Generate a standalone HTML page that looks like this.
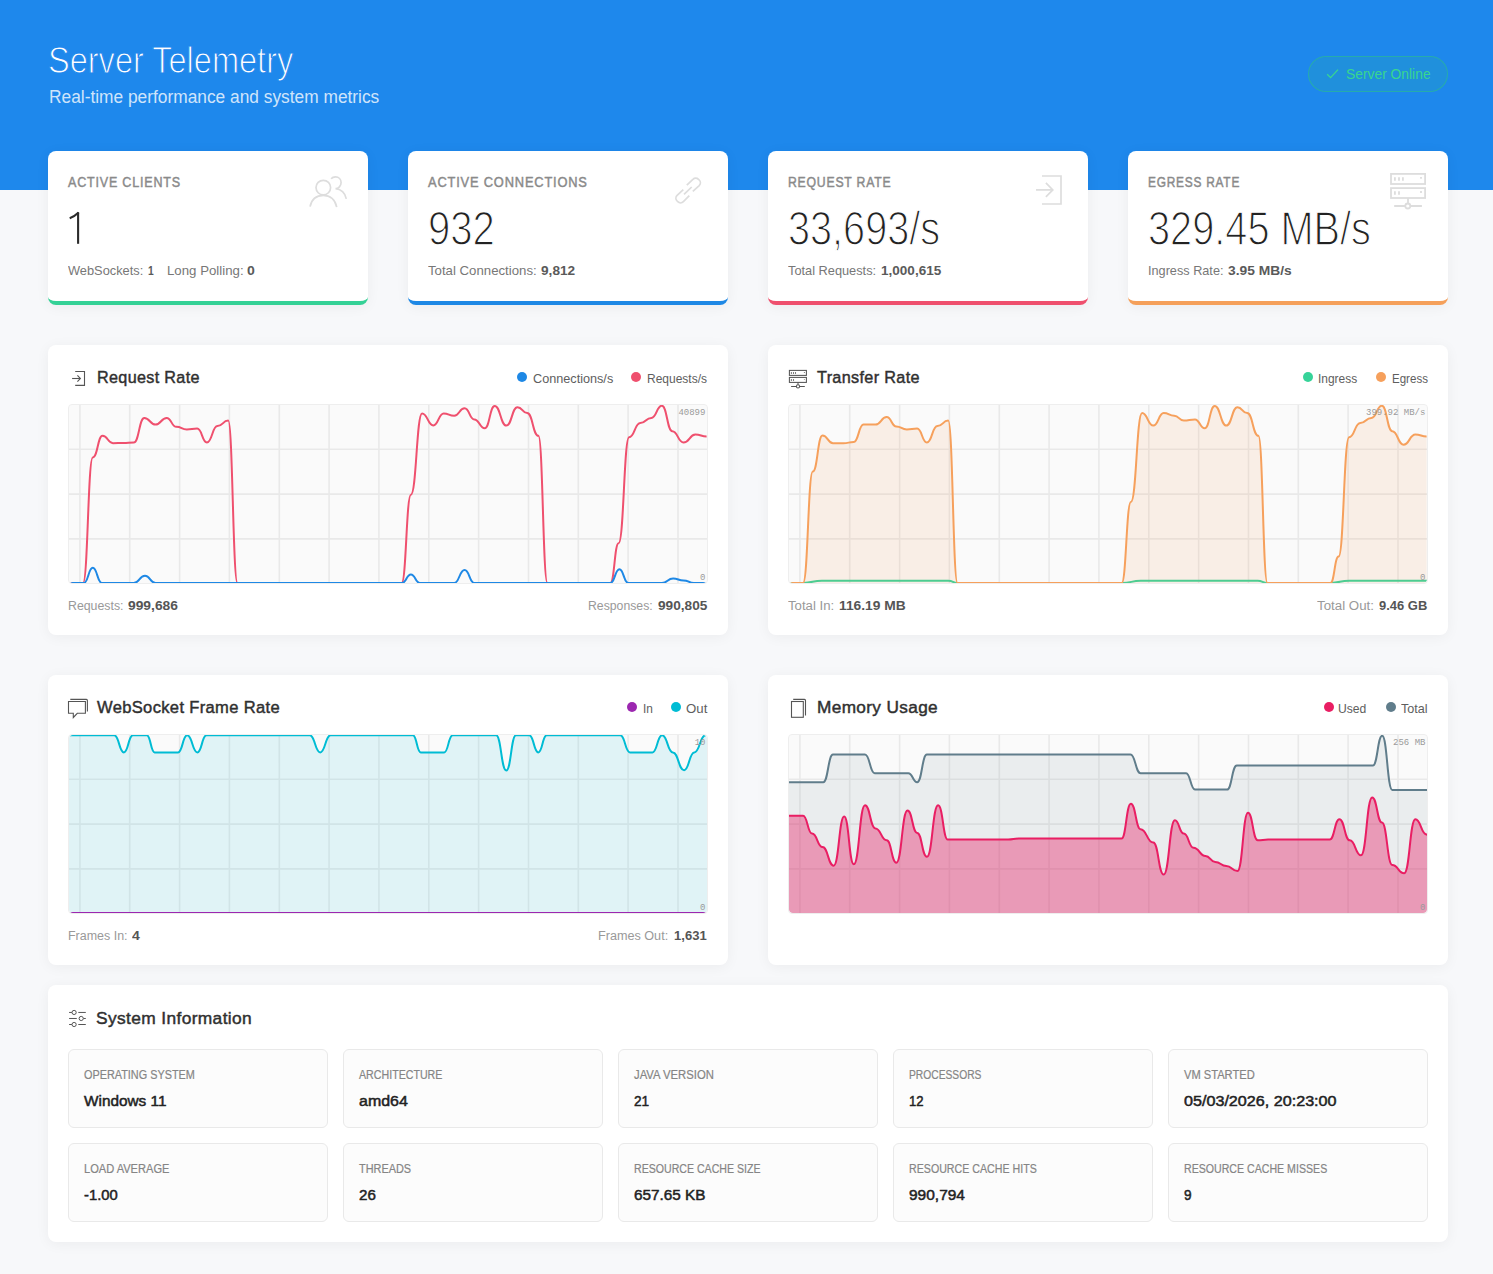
<!DOCTYPE html><html><head><meta charset="utf-8"><title>Server Telemetry</title><style>
*{margin:0;padding:0;box-sizing:border-box}
html,body{width:1493px;height:1274px;overflow:hidden;background:#f7f8fa;font-family:"Liberation Sans",sans-serif}
.t{position:absolute;white-space:nowrap;line-height:1}
.hdr{position:absolute;left:0;top:0;width:1493px;height:190px;background:#1e88ec}
.card{position:absolute;background:#fff;border-radius:8px;box-shadow:0 2px 14px rgba(0,0,0,0.05)}
.stat{width:320px;height:154px;border-bottom:4px solid}
.ic{position:absolute}
.chart{position:absolute;overflow:hidden;border-radius:4px}
.cbox{position:absolute;width:640px;height:180px;border:1px solid #eeeeee;border-radius:4px;pointer-events:none}
.mono{position:absolute;font-family:"Liberation Mono",monospace;line-height:1;color:#9a9a9a;white-space:nowrap}
.dot{position:absolute;width:10px;height:10px;border-radius:50%}
.sub{position:absolute;width:260px;height:79px;background:#fcfcfc;border:1px solid #e9e9e9;border-radius:6px}
</style></head><body><div class="hdr"></div>
<div class="t" style="left:48.41px;top:42.50px;font-size:36.5px;color:#ffffff;transform:scaleX(0.8912);transform-origin:0 0;-webkit-text-stroke:1.1px #1e88ec;">Server Telemetry</div>
<div class="t" style="left:48.60px;top:88.41px;font-size:18.3px;color:rgba(255,255,255,0.8);transform:scaleX(0.9478);transform-origin:0 0;">Real-time performance and system metrics</div>
<div style="position:absolute;left:1308px;top:56px;width:140px;height:36px;border-radius:18px;background:rgba(46,204,113,0.13);border:1px solid rgba(46,204,113,0.45)"></div>
<svg style="position:absolute;left:1326px;top:68px" width="14" height="12" viewBox="0 0 14 12" fill="none" stroke="#38d690" stroke-width="1.3"><path d="M1.2 6.2 L4.6 9.6 L12 1.6"/></svg>
<div class="t" style="left:1346.20px;top:67.15px;font-size:14px;color:#38d690;transform:scaleX(0.9882);transform-origin:0 0;">Server Online</div>
<div class="card stat" style="left:48px;top:151px;border-bottom-color:#34d196"></div>
<div class="t" style="left:67.90px;top:175.18px;font-size:14.2px;color:#8a8a8a;letter-spacing:0.900px;transform:scaleX(0.8839);transform-origin:0 0;-webkit-text-stroke:0.45px #8a8a8a;">ACTIVE CLIENTS</div>
<svg style="position:absolute;left:60px;top:205px;overflow:visible" width="30" height="45" viewBox="60 205 30 45" fill="none" stroke="#2b2b2b" stroke-width="2.1"><path d="M69.7 218.2 C73 217 76 215.2 78.6 212.6"/><path d="M78.1 212.3 V243.8"/></svg>
<div class="t" style="left:67.70px;top:264.25px;font-size:13.4px;color:#777;transform:scaleX(0.9565);transform-origin:0 0;">WebSockets:</div>
<div class="t" style="left:148.30px;top:264.25px;font-size:13.4px;color:#5a5a5a;font-weight:bold;transform:scaleX(0.7664);transform-origin:0 0;">1</div>
<div class="t" style="left:166.90px;top:264.25px;font-size:13.4px;color:#777;transform:scaleX(0.9890);transform-origin:0 0;">Long Polling:</div>
<div class="t" style="left:247.00px;top:264.25px;font-size:13.4px;color:#5a5a5a;font-weight:bold;transform:scaleX(1.0488);transform-origin:0 0;">0</div>
<svg style="position:absolute;left:300px;top:165px;overflow:visible" width="60" height="55" viewBox="300 165 60 55" fill="none" stroke="#dddddd" stroke-width="1.7"><circle cx="323.3" cy="187.6" r="7.3"/><path d="M310.1 206.6 C311.5 199.5 316.5 195.4 323.3 195.4 C330.1 195.4 335.2 199.8 336.7 207.1"/><path d="M331.1 178.8 C332.2 177.5 333.7 176.9 335.5 176.9 C338.7 176.9 341.1 179.4 341.1 182.6 C341.1 185.8 338.6 188.6 335.5 188.6 C340.8 188.8 345.4 193.2 346.3 198.8"/></svg>
<div class="card stat" style="left:408px;top:151px;border-bottom-color:#1e88e5"></div>
<div class="t" style="left:427.90px;top:175.18px;font-size:14.2px;color:#8a8a8a;letter-spacing:0.900px;transform:scaleX(0.9066);transform-origin:0 0;-webkit-text-stroke:0.45px #8a8a8a;">ACTIVE CONNECTIONS</div>
<div class="t" style="left:427.92px;top:203.69px;font-size:48.2px;color:#222222;transform:scaleX(0.8319);transform-origin:0 0;-webkit-text-stroke:1.4px #ffffff;">932</div>
<div class="t" style="left:428.00px;top:264.25px;font-size:13.4px;color:#777;transform:scaleX(0.9863);transform-origin:0 0;">Total Connections:</div>
<div class="t" style="left:541.30px;top:264.25px;font-size:13.4px;color:#5a5a5a;font-weight:bold;transform:scaleX(1.0189);transform-origin:0 0;">9,812</div>
<svg style="position:absolute;left:660px;top:165px;overflow:visible" width="60" height="55" viewBox="660 165 60 55" fill="none" stroke="#dddddd" stroke-width="1.7"><path d="M686.8 185.1 L692.9 179.3 C694.5 177.7 696.9 177.7 698.5 179.3 L699.2 180 C700.8 181.6 700.8 184 699.2 185.6 L692.8 191.3"/><path d="M683.3 189.6 L677.1 195.4 C675.5 197 675.5 199.4 677.1 201 L677.8 201.7 C679.4 203.3 681.8 203.3 683.4 201.7 L689.3 195.6"/><path d="M684 194.3 L691.7 187"/></svg>
<div class="card stat" style="left:768px;top:151px;border-bottom-color:#ef506e"></div>
<div class="t" style="left:787.89px;top:175.18px;font-size:14.2px;color:#8a8a8a;letter-spacing:0.900px;transform:scaleX(0.8629);transform-origin:0 0;-webkit-text-stroke:0.45px #8a8a8a;">REQUEST RATE</div>
<div class="t" style="left:787.92px;top:203.69px;font-size:48.2px;color:#222222;transform:scaleX(0.8226);transform-origin:0 0;-webkit-text-stroke:1.4px #ffffff;">33,693/s</div>
<div class="t" style="left:788.00px;top:264.25px;font-size:13.4px;color:#777;transform:scaleX(0.9546);transform-origin:0 0;">Total Requests:</div>
<div class="t" style="left:881.40px;top:264.25px;font-size:13.4px;color:#5a5a5a;font-weight:bold;transform:scaleX(1.0112);transform-origin:0 0;">1,000,615</div>
<svg style="position:absolute;left:1020px;top:165px;overflow:visible" width="60" height="55" viewBox="1020 165 60 55" fill="none" stroke="#dddddd" stroke-width="1.7"><path d="M1042 176 H1061 V204 H1042"/><path d="M1036 189.9 H1052.6"/><path d="M1045.9 182.9 L1052.8 189.9 L1045.9 196.9"/></svg>
<div class="card stat" style="left:1128px;top:151px;border-bottom-color:#f5a05a"></div>
<div class="t" style="left:1147.89px;top:175.18px;font-size:14.2px;color:#8a8a8a;letter-spacing:0.900px;transform:scaleX(0.8390);transform-origin:0 0;-webkit-text-stroke:0.45px #8a8a8a;">EGRESS RATE</div>
<div class="t" style="left:1147.92px;top:203.69px;font-size:48.2px;color:#222222;transform:scaleX(0.8242);transform-origin:0 0;-webkit-text-stroke:1.4px #ffffff;">329.45 MB/s</div>
<div class="t" style="left:1148.20px;top:264.25px;font-size:13.4px;color:#777;transform:scaleX(0.9477);transform-origin:0 0;">Ingress Rate:</div>
<div class="t" style="left:1228.30px;top:264.25px;font-size:13.4px;color:#5a5a5a;font-weight:bold;transform:scaleX(1.0301);transform-origin:0 0;">3.95 MB/s</div>
<svg style="position:absolute;left:1380px;top:165px;overflow:visible" width="60" height="55" viewBox="1380 165 60 55" fill="none" stroke="#dddddd" stroke-width="1.8"><rect x="1391" y="173.9" width="34.1" height="10.1"/><rect x="1391" y="188.1" width="34.1" height="9.9"/><path d="M1394.9 177.3 V180.8 M1399 177.3 V180.8 M1402.9 177.3 V180.8 M1394.9 191.3 V194.8 M1399 191.3 V194.8 M1421 177 V178.8 M1421 191.1 V192.9 M1408 198 V203.5 M1394.2 206 H1405.3 M1410.3 206 H1421.9"/><circle cx="1407.8" cy="206" r="2.5"/></svg>
<div class="card" style="left:48px;top:345px;width:680px;height:290px"></div>
<div class="card" style="left:768px;top:345px;width:680px;height:290px"></div>
<div class="card" style="left:48px;top:675px;width:680px;height:290px"></div>
<div class="card" style="left:768px;top:675px;width:680px;height:290px"></div>
<svg style="position:absolute;left:66px;top:365px;overflow:visible" width="26" height="26" viewBox="66 365 26 26" fill="none" stroke="#555555" stroke-width="1.1"><path d="M75.2 371.5 H84.5 V385.4 H75.2"/><path d="M72.1 378.5 H80.1"/><path d="M77.4 375.4 L80.4 378.5 L77.4 381.6"/></svg>
<div class="t" style="left:96.91px;top:369.34px;font-size:17.2px;color:#303030;letter-spacing:0.350px;transform:scaleX(0.9408);transform-origin:0 0;-webkit-text-stroke:0.45px #303030;">Request Rate</div>
<div class="dot" style="left:517px;top:372px;background:#1e88e5"></div>
<div class="t" style="left:532.50px;top:371.59px;font-size:13px;color:#5e5e5e;transform:scaleX(0.9738);transform-origin:0 0;">Connections/s</div>
<div class="dot" style="left:631px;top:372px;background:#ef506e"></div>
<div class="t" style="left:647.00px;top:371.59px;font-size:13px;color:#5e5e5e;transform:scaleX(0.9222);transform-origin:0 0;">Requests/s</div>
<svg class="chart" style="left:69px;top:405px" width="638" height="178" viewBox="69 405 638 178"><rect x="69" y="405" width="638" height="178" fill="#fafafa"/><path d="M79.9 404 V584 M129.7 404 V584 M179.6 404 V584 M229.4 404 V584 M279.3 404 V584 M329.1 404 V584 M378.9 404 V584 M428.8 404 V584 M478.6 404 V584 M528.5 404 V584 M578.3 404 V584 M628.1 404 V584 M678.0 404 V584 M68 449.3 H708 M68 494.1 H708 M68 538.9 H708" stroke="#e9e9e9" stroke-width="1.6" fill="none"/><path d="M68.0 583.0 C75.5 583.0 75.5 583.0 83.1 583.0 C87.9 583.0 87.9 457.4 92.8 457.4 C97.7 457.4 97.7 435.8 102.5 435.8 C107.8 435.8 107.8 443.2 113.0 443.2 C118.2 443.2 118.2 443.0 123.4 443.0 C128.6 443.0 128.6 442.5 133.8 442.5 C139.1 442.5 139.1 417.9 144.3 417.9 C149.9 417.9 149.9 424.6 155.5 424.6 C161.1 424.6 161.1 417.9 166.7 417.9 C171.5 417.9 171.5 426.8 176.3 426.8 C181.6 426.8 181.6 429.5 186.8 429.5 C192.0 429.5 192.0 428.6 197.2 428.6 C202.1 428.6 202.1 442.5 206.9 442.5 C212.2 442.5 212.2 426.1 217.4 426.1 C222.8 426.1 222.8 420.6 228.2 420.6 C232.8 420.6 232.8 583.0 237.5 583.0 C319.6 583.0 319.6 583.0 401.7 583.0 C406.3 583.0 406.3 494.7 410.9 494.7 C416.5 494.7 416.5 413.4 422.1 413.4 C427.7 413.4 427.7 425.4 433.3 425.4 C438.5 425.4 438.5 413.4 443.7 413.4 C448.9 413.4 448.9 415.7 454.2 415.7 C459.4 415.7 459.4 408.2 464.6 408.2 C469.5 408.2 469.5 419.4 474.3 419.4 C479.5 419.4 479.5 428.3 484.7 428.3 C489.7 428.3 489.7 406.0 494.7 406.0 C500.5 406.0 500.5 425.6 506.3 425.6 C511.9 425.6 511.9 407.2 517.5 407.2 C522.4 407.2 522.4 413.1 527.2 413.1 C532.8 413.1 532.8 435.8 538.4 435.8 C542.9 435.8 542.9 583.0 547.4 583.0 C578.9 583.0 578.9 583.0 610.4 583.0 C614.5 583.0 614.5 543.2 618.6 543.2 C623.9 543.2 623.9 437.3 629.1 437.3 C634.7 437.3 634.7 423.1 640.3 423.1 C645.8 423.1 645.8 417.9 651.4 417.9 C656.6 417.9 656.6 405.7 661.9 405.7 C667.1 405.7 667.1 431.3 672.3 431.3 C677.9 431.3 677.9 442.5 683.5 442.5 C689.5 442.5 689.5 434.6 695.4 434.6 C701.0 434.6 701.0 436.5 706.6 436.5" stroke="#ef506e" stroke-width="2" fill="none" stroke-linejoin="round"/><path d="M68.0 583.0 C76.0 583.0 76.0 583.0 83.9 583.0 C88.3 583.0 88.3 567.8 92.8 567.8 C97.3 567.8 97.3 583.0 101.8 583.0 C117.8 583.0 117.8 583.0 133.8 583.0 C139.4 583.0 139.4 575.7 145.0 575.7 C150.2 575.7 150.2 583.0 155.5 583.0 C278.8 583.0 278.8 583.0 402.0 583.0 C406.4 583.0 406.4 574.5 410.9 574.5 C415.4 574.5 415.4 583.0 419.9 583.0 C437.0 583.0 437.0 583.0 454.2 583.0 C459.4 583.0 459.4 570.0 464.6 570.0 C469.5 570.0 469.5 583.0 474.3 583.0 C542.4 583.0 542.4 583.0 610.4 583.0 C614.9 583.0 614.9 569.3 619.4 569.3 C623.8 569.3 623.8 583.0 628.3 583.0 C645.1 583.0 645.1 583.0 661.9 583.0 C667.5 583.0 667.5 578.6 673.1 578.6 C678.3 578.6 678.3 580.4 683.5 580.4 C688.7 580.4 688.7 583.0 693.9 583.0 C701.0 583.0 701.0 583.0 708.0 583.0" stroke="#1e88e5" stroke-width="2" fill="none" stroke-linejoin="round"/></svg>
<div class="mono" style="right:787.57px;top:408.61px;font-size:9px">40899</div>
<div class="mono" style="right:787.57px;top:574.31px;font-size:9px">0</div>
<div class="cbox" style="left:68px;top:404px"></div>
<div class="t" style="left:68.40px;top:598.70px;font-size:13.7px;color:#999;transform:scaleX(0.9009);transform-origin:0 0;">Requests:</div>
<div class="t" style="left:128.40px;top:598.70px;font-size:13.7px;color:#555;font-weight:bold;transform:scaleX(1.0096);transform-origin:0 0;">999,686</div>
<div class="t" style="left:588.30px;top:598.70px;font-size:13.7px;color:#999;transform:scaleX(0.8944);transform-origin:0 0;">Responses:</div>
<div class="t" style="left:657.70px;top:598.70px;font-size:13.7px;color:#555;font-weight:bold;transform:scaleX(0.9975);transform-origin:0 0;">990,805</div>
<svg style="position:absolute;left:784px;top:365px;overflow:visible" width="28" height="26" viewBox="784 365 28 26" fill="none" stroke="#555555" stroke-width="1.05"><rect x="789.4" y="370.4" width="17" height="5"/><rect x="789.4" y="377.4" width="17" height="5"/><path d="M791.4 372.3 V373.7 M793.5 372.3 V373.7 M795.5 372.3 V373.7 M791.4 379.3 V380.7 M793.5 379.3 V380.7 M804.4 372.3 V372.9 M804.4 379.2 V379.8 M798 382.4 V384.8 M791.1 386.4 H796.4 M799.6 386.4 H804.8"/><circle cx="798" cy="386.4" r="1.6"/></svg>
<div class="t" style="left:816.91px;top:369.34px;font-size:17.2px;color:#303030;letter-spacing:0.350px;transform:scaleX(0.9437);transform-origin:0 0;-webkit-text-stroke:0.45px #303030;">Transfer Rate</div>
<div class="dot" style="left:1303px;top:372px;background:#36d399"></div>
<div class="t" style="left:1318.40px;top:371.59px;font-size:13px;color:#5e5e5e;transform:scaleX(0.9193);transform-origin:0 0;">Ingress</div>
<div class="dot" style="left:1376px;top:372px;background:#f6a05c"></div>
<div class="t" style="left:1391.60px;top:371.59px;font-size:13px;color:#5e5e5e;transform:scaleX(0.8880);transform-origin:0 0;">Egress</div>
<svg class="chart" style="left:789px;top:405px" width="638" height="178" viewBox="789 405 638 178"><rect x="789" y="405" width="638" height="178" fill="#fafafa"/><path d="M799.9 404 V584 M849.7 404 V584 M899.6 404 V584 M949.4 404 V584 M999.3 404 V584 M1049.1 404 V584 M1098.9 404 V584 M1148.8 404 V584 M1198.6 404 V584 M1248.5 404 V584 M1298.3 404 V584 M1348.1 404 V584 M1398.0 404 V584 M788 449.3 H1428 M788 494.1 H1428 M788 538.9 H1428" stroke="#e9e9e9" stroke-width="1.6" fill="none"/><path d="M788.0 583.0 C795.5 583.0 795.5 583.0 803.1 583.0 C812.5 583.0 812.5 580.7 821.8 580.7 C885.1 580.7 885.1 580.7 948.5 580.7 C953.0 580.7 953.0 583.0 957.5 583.0 C1039.8 583.0 1039.8 583.0 1122.0 583.0 C1131.3 583.0 1131.3 580.7 1140.6 580.7 C1199.2 580.7 1199.2 580.7 1257.7 580.7 C1262.6 580.7 1262.6 583.0 1267.4 583.0 C1298.9 583.0 1298.9 583.0 1330.4 583.0 C1339.8 583.0 1339.8 580.7 1349.1 580.7 C1388.5 580.7 1388.5 580.7 1428.0 580.7" stroke="#36d399" stroke-width="2" fill="none" stroke-linejoin="round"/><path d="M788.0 583.0 C795.5 583.0 795.5 583.0 803.1 583.0 C808.0 583.0 808.0 471.6 812.8 471.6 C817.6 471.6 817.6 435.5 822.5 435.5 C827.8 435.5 827.8 443.2 833.0 443.2 C838.2 443.2 838.2 443.2 843.4 443.2 C848.6 443.2 848.6 442.0 853.8 442.0 C858.6 442.0 858.6 424.6 863.5 424.6 C869.5 424.6 869.5 424.6 875.5 424.6 C881.1 424.6 881.1 417.1 886.7 417.1 C891.5 417.1 891.5 426.5 896.3 426.5 C901.5 426.5 901.5 429.5 906.8 429.5 C912.0 429.5 912.0 428.6 917.2 428.6 C922.0 428.6 922.0 442.5 926.9 442.5 C932.1 442.5 932.1 426.1 937.4 426.1 C942.8 426.1 942.8 420.6 948.2 420.6 C952.9 420.6 952.9 583.0 957.5 583.0 C1039.6 583.0 1039.6 583.0 1121.7 583.0 C1126.3 583.0 1126.3 502.1 1130.9 502.1 C1136.5 502.1 1136.5 413.1 1142.1 413.1 C1147.7 413.1 1147.7 425.6 1153.3 425.6 C1158.5 425.6 1158.5 413.1 1163.7 413.1 C1169.0 413.1 1169.0 415.7 1174.2 415.7 C1179.0 415.7 1179.0 420.6 1183.8 420.6 C1189.4 420.6 1189.4 419.4 1195.0 419.4 C1199.8 419.4 1199.8 428.3 1204.7 428.3 C1209.7 428.3 1209.7 406.0 1214.7 406.0 C1220.5 406.0 1220.5 425.6 1226.3 425.6 C1231.9 425.6 1231.9 407.2 1237.5 407.2 C1242.3 407.2 1242.3 413.1 1247.2 413.1 C1252.8 413.1 1252.8 435.8 1258.4 435.8 C1262.9 435.8 1262.9 583.0 1267.4 583.0 C1298.9 583.0 1298.9 583.0 1330.4 583.0 C1334.5 583.0 1334.5 556.6 1338.6 556.6 C1343.8 556.6 1343.8 437.3 1349.1 437.3 C1354.7 437.3 1354.7 423.1 1360.3 423.1 C1365.8 423.1 1365.8 417.9 1371.4 417.9 C1376.7 417.9 1376.7 405.7 1381.9 405.7 C1387.1 405.7 1387.1 431.3 1392.3 431.3 C1397.9 431.3 1397.9 444.7 1403.5 444.7 C1409.5 444.7 1409.5 434.6 1415.4 434.6 C1421.0 434.6 1421.0 436.5 1426.6 436.5 L1426.6 586 L788 586 Z" fill="rgba(246,160,92,0.12)"/><path d="M788.0 583.0 C795.5 583.0 795.5 583.0 803.1 583.0 C808.0 583.0 808.0 471.6 812.8 471.6 C817.6 471.6 817.6 435.5 822.5 435.5 C827.8 435.5 827.8 443.2 833.0 443.2 C838.2 443.2 838.2 443.2 843.4 443.2 C848.6 443.2 848.6 442.0 853.8 442.0 C858.6 442.0 858.6 424.6 863.5 424.6 C869.5 424.6 869.5 424.6 875.5 424.6 C881.1 424.6 881.1 417.1 886.7 417.1 C891.5 417.1 891.5 426.5 896.3 426.5 C901.5 426.5 901.5 429.5 906.8 429.5 C912.0 429.5 912.0 428.6 917.2 428.6 C922.0 428.6 922.0 442.5 926.9 442.5 C932.1 442.5 932.1 426.1 937.4 426.1 C942.8 426.1 942.8 420.6 948.2 420.6 C952.9 420.6 952.9 583.0 957.5 583.0 C1039.6 583.0 1039.6 583.0 1121.7 583.0 C1126.3 583.0 1126.3 502.1 1130.9 502.1 C1136.5 502.1 1136.5 413.1 1142.1 413.1 C1147.7 413.1 1147.7 425.6 1153.3 425.6 C1158.5 425.6 1158.5 413.1 1163.7 413.1 C1169.0 413.1 1169.0 415.7 1174.2 415.7 C1179.0 415.7 1179.0 420.6 1183.8 420.6 C1189.4 420.6 1189.4 419.4 1195.0 419.4 C1199.8 419.4 1199.8 428.3 1204.7 428.3 C1209.7 428.3 1209.7 406.0 1214.7 406.0 C1220.5 406.0 1220.5 425.6 1226.3 425.6 C1231.9 425.6 1231.9 407.2 1237.5 407.2 C1242.3 407.2 1242.3 413.1 1247.2 413.1 C1252.8 413.1 1252.8 435.8 1258.4 435.8 C1262.9 435.8 1262.9 583.0 1267.4 583.0 C1298.9 583.0 1298.9 583.0 1330.4 583.0 C1334.5 583.0 1334.5 556.6 1338.6 556.6 C1343.8 556.6 1343.8 437.3 1349.1 437.3 C1354.7 437.3 1354.7 423.1 1360.3 423.1 C1365.8 423.1 1365.8 417.9 1371.4 417.9 C1376.7 417.9 1376.7 405.7 1381.9 405.7 C1387.1 405.7 1387.1 431.3 1392.3 431.3 C1397.9 431.3 1397.9 444.7 1403.5 444.7 C1409.5 444.7 1409.5 434.6 1415.4 434.6 C1421.0 434.6 1421.0 436.5 1426.6 436.5" stroke="#f6a05c" stroke-width="2" fill="none" stroke-linejoin="round"/></svg>
<div class="mono" style="right:67.57px;top:408.61px;font-size:9px">399.92 MB/s</div>
<div class="mono" style="right:67.57px;top:574.31px;font-size:9px">0</div>
<div class="cbox" style="left:788px;top:404px"></div>
<div class="t" style="left:788.00px;top:598.70px;font-size:13.7px;color:#999;transform:scaleX(0.9635);transform-origin:0 0;">Total In:</div>
<div class="t" style="left:838.90px;top:598.70px;font-size:13.7px;color:#555;font-weight:bold;transform:scaleX(1.0085);transform-origin:0 0;">116.19 MB</div>
<div class="t" style="left:1317.10px;top:598.70px;font-size:13.7px;color:#999;transform:scaleX(0.9721);transform-origin:0 0;">Total Out:</div>
<div class="t" style="left:1378.80px;top:598.70px;font-size:13.7px;color:#555;font-weight:bold;transform:scaleX(0.9465);transform-origin:0 0;">9.46 GB</div>
<svg style="position:absolute;left:64px;top:694px;overflow:visible" width="28" height="28" viewBox="64 694 28 28" fill="none" stroke="#555555" stroke-width="1.1"><path d="M70.3 699.4 H86.4 Q87.4 699.4 87.4 700.4 V711.6"/><path d="M68.5 701.5 H85.4 V713.3 H77.3 L73.3 717.5 V713.3 H68.5 Z"/></svg>
<div class="t" style="left:96.92px;top:699.34px;font-size:17.2px;color:#303030;letter-spacing:0.350px;transform:scaleX(0.9624);transform-origin:0 0;-webkit-text-stroke:0.45px #303030;">WebSocket Frame Rate</div>
<div class="dot" style="left:626.7px;top:702px;background:#9c27b0"></div>
<div class="t" style="left:642.50px;top:701.59px;font-size:13px;color:#5e5e5e;transform:scaleX(0.9120);transform-origin:0 0;">In</div>
<div class="dot" style="left:670.8px;top:702px;background:#00bcd4"></div>
<div class="t" style="left:686.00px;top:701.59px;font-size:13px;color:#5e5e5e;transform:scaleX(1.0177);transform-origin:0 0;">Out</div>
<svg class="chart" style="left:69px;top:735px" width="638" height="178" viewBox="69 735 638 178"><rect x="69" y="735" width="638" height="178" fill="#fafafa"/><path d="M79.9 734 V914 M129.7 734 V914 M179.6 734 V914 M229.4 734 V914 M279.3 734 V914 M329.1 734 V914 M378.9 734 V914 M428.8 734 V914 M478.6 734 V914 M528.5 734 V914 M578.3 734 V914 M628.1 734 V914 M678.0 734 V914 M68 779.3 H708 M68 824.1 H708 M68 868.9 H708" stroke="#e9e9e9" stroke-width="1.6" fill="none"/><path d="M68.0 735.2 C91.1 735.2 91.1 735.2 114.2 735.2 C119.1 735.2 119.1 752.4 123.9 752.4 C128.4 752.4 128.4 735.2 132.9 735.2 C139.9 735.2 139.9 735.2 146.8 735.2 C150.7 735.2 150.7 752.4 154.6 752.4 C166.3 752.4 166.3 752.4 178.1 752.4 C182.6 752.4 182.6 735.2 187.2 735.2 C192.3 735.2 192.3 752.4 197.4 752.4 C201.9 752.4 201.9 735.2 206.5 735.2 C258.1 735.2 258.1 735.2 309.8 735.2 C315.0 735.2 315.0 752.4 320.2 752.4 C325.4 752.4 325.4 735.2 330.6 735.2 C371.8 735.2 371.8 735.2 412.9 735.2 C416.8 735.2 416.8 752.4 420.7 752.4 C432.4 752.4 432.4 752.4 444.2 752.4 C448.4 752.4 448.4 735.2 452.7 735.2 C474.4 735.2 474.4 735.2 496.1 735.2 C501.2 735.2 501.2 770.4 506.3 770.4 C511.1 770.4 511.1 735.2 516.0 735.2 C522.6 735.2 522.6 735.2 529.2 735.2 C533.8 735.2 533.8 752.4 538.3 752.4 C542.5 752.4 542.5 735.2 546.7 735.2 C583.5 735.2 583.5 735.2 620.3 735.2 C625.1 735.2 625.1 752.4 630.0 752.4 C641.2 752.4 641.2 752.4 652.5 752.4 C657.3 752.4 657.3 735.2 662.1 735.2 C667.5 735.2 667.5 752.4 672.8 752.4 C678.5 752.4 678.5 770.2 684.1 770.2 C689.2 770.2 689.2 752.4 694.3 752.4 C699.9 752.4 699.9 735.2 705.5 735.2 C706.8 735.2 706.8 733.0 708.0 733.0 L708 916 L68 916 Z" fill="rgba(0,188,212,0.1)"/><path d="M68.0 735.2 C91.1 735.2 91.1 735.2 114.2 735.2 C119.1 735.2 119.1 752.4 123.9 752.4 C128.4 752.4 128.4 735.2 132.9 735.2 C139.9 735.2 139.9 735.2 146.8 735.2 C150.7 735.2 150.7 752.4 154.6 752.4 C166.3 752.4 166.3 752.4 178.1 752.4 C182.6 752.4 182.6 735.2 187.2 735.2 C192.3 735.2 192.3 752.4 197.4 752.4 C201.9 752.4 201.9 735.2 206.5 735.2 C258.1 735.2 258.1 735.2 309.8 735.2 C315.0 735.2 315.0 752.4 320.2 752.4 C325.4 752.4 325.4 735.2 330.6 735.2 C371.8 735.2 371.8 735.2 412.9 735.2 C416.8 735.2 416.8 752.4 420.7 752.4 C432.4 752.4 432.4 752.4 444.2 752.4 C448.4 752.4 448.4 735.2 452.7 735.2 C474.4 735.2 474.4 735.2 496.1 735.2 C501.2 735.2 501.2 770.4 506.3 770.4 C511.1 770.4 511.1 735.2 516.0 735.2 C522.6 735.2 522.6 735.2 529.2 735.2 C533.8 735.2 533.8 752.4 538.3 752.4 C542.5 752.4 542.5 735.2 546.7 735.2 C583.5 735.2 583.5 735.2 620.3 735.2 C625.1 735.2 625.1 752.4 630.0 752.4 C641.2 752.4 641.2 752.4 652.5 752.4 C657.3 752.4 657.3 735.2 662.1 735.2 C667.5 735.2 667.5 752.4 672.8 752.4 C678.5 752.4 678.5 770.2 684.1 770.2 C689.2 770.2 689.2 752.4 694.3 752.4 C699.9 752.4 699.9 735.2 705.5 735.2 C706.8 735.2 706.8 733.0 708.0 733.0" stroke="#00bcd4" stroke-width="2" fill="none" stroke-linejoin="round"/><path d="M68.0 913.0 C388.0 913.0 388.0 913.0 708.0 913.0" stroke="#9c27b0" stroke-width="2" fill="none" stroke-linejoin="round"/></svg>
<div class="mono" style="right:787.57px;top:738.61px;font-size:9px">10</div>
<div class="mono" style="right:787.57px;top:904.31px;font-size:9px">0</div>
<div class="cbox" style="left:68px;top:734px"></div>
<div class="t" style="left:68.40px;top:928.70px;font-size:13.7px;color:#999;transform:scaleX(0.9101);transform-origin:0 0;">Frames In:</div>
<div class="t" style="left:132.00px;top:928.70px;font-size:13.7px;color:#555;font-weight:bold;transform:scaleX(1.0258);transform-origin:0 0;">4</div>
<div class="t" style="left:597.80px;top:928.70px;font-size:13.7px;color:#999;transform:scaleX(0.9224);transform-origin:0 0;">Frames Out:</div>
<div class="t" style="left:673.60px;top:928.70px;font-size:13.7px;color:#555;font-weight:bold;transform:scaleX(0.9528);transform-origin:0 0;">1,631</div>
<svg style="position:absolute;left:784px;top:694px;overflow:visible" width="28" height="28" viewBox="784 694 28 28" fill="none" stroke="#555555" stroke-width="1.1"><path d="M793.2 699.4 H804.5 Q805.5 699.4 805.5 700.4 V715.5"/><rect x="791.5" y="701.5" width="11.8" height="15.8"/></svg>
<div class="t" style="left:816.93px;top:699.34px;font-size:17.2px;color:#303030;letter-spacing:0.350px;transform:scaleX(1.0023);transform-origin:0 0;-webkit-text-stroke:0.45px #303030;">Memory Usage</div>
<div class="dot" style="left:1323.8px;top:702px;background:#e91e63"></div>
<div class="t" style="left:1338.40px;top:701.59px;font-size:13px;color:#5e5e5e;transform:scaleX(0.9323);transform-origin:0 0;">Used</div>
<div class="dot" style="left:1386px;top:702px;background:#607d8b"></div>
<div class="t" style="left:1400.90px;top:701.59px;font-size:13px;color:#5e5e5e;transform:scaleX(0.9697);transform-origin:0 0;">Total</div>
<svg class="chart" style="left:789px;top:735px" width="638" height="178" viewBox="789 735 638 178"><rect x="789" y="735" width="638" height="178" fill="#fafafa"/><path d="M799.9 734 V914 M849.7 734 V914 M899.6 734 V914 M949.4 734 V914 M999.3 734 V914 M1049.1 734 V914 M1098.9 734 V914 M1148.8 734 V914 M1198.6 734 V914 M1248.5 734 V914 M1298.3 734 V914 M1348.1 734 V914 M1398.0 734 V914 M788 779.3 H1428 M788 824.1 H1428 M788 868.9 H1428" stroke="#e9e9e9" stroke-width="1.6" fill="none"/><path d="M788.0 782.2 C805.6 782.2 805.6 782.2 823.3 782.2 C828.1 782.2 828.1 754.6 833.0 754.6 C849.0 754.6 849.0 754.6 865.0 754.6 C869.9 754.6 869.9 773.2 874.7 773.2 C891.5 773.2 891.5 773.2 908.3 773.2 C912.8 773.2 912.8 782.2 917.2 782.2 C922.0 782.2 922.0 754.6 926.9 754.6 C1028.7 754.6 1028.7 754.6 1130.5 754.6 C1135.5 754.6 1135.5 773.2 1140.6 773.2 C1163.3 773.2 1163.3 773.2 1186.1 773.2 C1190.5 773.2 1190.5 789.6 1195.0 789.6 C1211.0 789.6 1211.0 789.6 1227.1 789.6 C1231.9 789.6 1231.9 765.5 1236.8 765.5 C1304.8 765.5 1304.8 765.5 1372.9 765.5 C1377.6 765.5 1377.6 735.7 1382.2 735.7 C1387.2 735.7 1387.2 790.0 1392.3 790.0 C1410.2 790.0 1410.2 790.0 1428.0 790.0 L1428 916 L788 916 Z" fill="rgba(96,125,139,0.1)"/><path d="M788.0 782.2 C805.6 782.2 805.6 782.2 823.3 782.2 C828.1 782.2 828.1 754.6 833.0 754.6 C849.0 754.6 849.0 754.6 865.0 754.6 C869.9 754.6 869.9 773.2 874.7 773.2 C891.5 773.2 891.5 773.2 908.3 773.2 C912.8 773.2 912.8 782.2 917.2 782.2 C922.0 782.2 922.0 754.6 926.9 754.6 C1028.7 754.6 1028.7 754.6 1130.5 754.6 C1135.5 754.6 1135.5 773.2 1140.6 773.2 C1163.3 773.2 1163.3 773.2 1186.1 773.2 C1190.5 773.2 1190.5 789.6 1195.0 789.6 C1211.0 789.6 1211.0 789.6 1227.1 789.6 C1231.9 789.6 1231.9 765.5 1236.8 765.5 C1304.8 765.5 1304.8 765.5 1372.9 765.5 C1377.6 765.5 1377.6 735.7 1382.2 735.7 C1387.2 735.7 1387.2 790.0 1392.3 790.0 C1410.2 790.0 1410.2 790.0 1428.0 790.0" stroke="#607d8b" stroke-width="2" fill="none" stroke-linejoin="round"/><path d="M788.0 815.7 C795.5 815.7 795.5 815.7 803.1 815.7 C807.6 815.7 807.6 833.6 812.1 833.6 C817.3 833.6 817.3 847.0 822.5 847.0 C828.1 847.0 828.1 865.7 833.7 865.7 C839.0 865.7 839.0 816.5 844.2 816.5 C849.0 816.5 849.0 864.2 853.8 864.2 C859.4 864.2 859.4 805.3 865.0 805.3 C870.2 805.3 870.2 828.4 875.5 828.4 C881.1 828.4 881.1 840.3 886.7 840.3 C891.5 840.3 891.5 862.7 896.3 862.7 C901.9 862.7 901.9 810.5 907.5 810.5 C912.4 810.5 912.4 832.9 917.2 832.9 C922.0 832.9 922.0 856.8 926.9 856.8 C932.5 856.8 932.5 805.3 938.1 805.3 C943.0 805.3 943.0 839.6 947.8 839.6 C978.0 839.6 978.0 839.6 1008.2 839.6 C1013.4 839.6 1013.4 838.6 1018.6 838.6 C1070.0 838.6 1070.0 838.6 1121.5 838.6 C1126.2 838.6 1126.2 803.8 1130.9 803.8 C1135.8 803.8 1135.8 829.2 1140.6 829.2 C1146.9 829.2 1146.9 842.6 1153.3 842.6 C1158.5 842.6 1158.5 874.6 1163.7 874.6 C1169.3 874.6 1169.3 820.2 1174.9 820.2 C1179.3 820.2 1179.3 833.6 1183.8 833.6 C1188.7 833.6 1188.7 847.8 1193.5 847.8 C1199.5 847.8 1199.5 856.0 1205.5 856.0 C1210.3 856.0 1210.3 862.0 1215.2 862.0 C1220.8 862.0 1220.8 866.0 1226.3 866.0 C1231.9 866.0 1231.9 870.9 1237.5 870.9 C1242.8 870.9 1242.8 812.8 1248.0 812.8 C1252.8 812.8 1252.8 840.3 1257.7 840.3 C1262.9 840.3 1262.9 839.6 1268.1 839.6 C1298.9 839.6 1298.9 839.6 1329.7 839.6 C1334.6 839.6 1334.6 819.2 1339.4 819.2 C1344.6 819.2 1344.6 840.3 1349.8 840.3 C1355.4 840.3 1355.4 855.3 1361.0 855.3 C1366.6 855.3 1366.6 797.4 1372.2 797.4 C1377.1 797.4 1377.1 822.5 1381.9 822.5 C1387.1 822.5 1387.1 865.0 1392.3 865.0 C1398.2 865.0 1398.2 873.2 1404.2 873.2 C1409.8 873.2 1409.8 819.2 1415.4 819.2 C1421.0 819.2 1421.0 834.4 1426.6 834.4 C1427.3 834.4 1427.3 835.5 1428.0 835.5 L1428 916 L788 916 Z" fill="rgba(233,30,99,0.4)"/><path d="M788.0 815.7 C795.5 815.7 795.5 815.7 803.1 815.7 C807.6 815.7 807.6 833.6 812.1 833.6 C817.3 833.6 817.3 847.0 822.5 847.0 C828.1 847.0 828.1 865.7 833.7 865.7 C839.0 865.7 839.0 816.5 844.2 816.5 C849.0 816.5 849.0 864.2 853.8 864.2 C859.4 864.2 859.4 805.3 865.0 805.3 C870.2 805.3 870.2 828.4 875.5 828.4 C881.1 828.4 881.1 840.3 886.7 840.3 C891.5 840.3 891.5 862.7 896.3 862.7 C901.9 862.7 901.9 810.5 907.5 810.5 C912.4 810.5 912.4 832.9 917.2 832.9 C922.0 832.9 922.0 856.8 926.9 856.8 C932.5 856.8 932.5 805.3 938.1 805.3 C943.0 805.3 943.0 839.6 947.8 839.6 C978.0 839.6 978.0 839.6 1008.2 839.6 C1013.4 839.6 1013.4 838.6 1018.6 838.6 C1070.0 838.6 1070.0 838.6 1121.5 838.6 C1126.2 838.6 1126.2 803.8 1130.9 803.8 C1135.8 803.8 1135.8 829.2 1140.6 829.2 C1146.9 829.2 1146.9 842.6 1153.3 842.6 C1158.5 842.6 1158.5 874.6 1163.7 874.6 C1169.3 874.6 1169.3 820.2 1174.9 820.2 C1179.3 820.2 1179.3 833.6 1183.8 833.6 C1188.7 833.6 1188.7 847.8 1193.5 847.8 C1199.5 847.8 1199.5 856.0 1205.5 856.0 C1210.3 856.0 1210.3 862.0 1215.2 862.0 C1220.8 862.0 1220.8 866.0 1226.3 866.0 C1231.9 866.0 1231.9 870.9 1237.5 870.9 C1242.8 870.9 1242.8 812.8 1248.0 812.8 C1252.8 812.8 1252.8 840.3 1257.7 840.3 C1262.9 840.3 1262.9 839.6 1268.1 839.6 C1298.9 839.6 1298.9 839.6 1329.7 839.6 C1334.6 839.6 1334.6 819.2 1339.4 819.2 C1344.6 819.2 1344.6 840.3 1349.8 840.3 C1355.4 840.3 1355.4 855.3 1361.0 855.3 C1366.6 855.3 1366.6 797.4 1372.2 797.4 C1377.1 797.4 1377.1 822.5 1381.9 822.5 C1387.1 822.5 1387.1 865.0 1392.3 865.0 C1398.2 865.0 1398.2 873.2 1404.2 873.2 C1409.8 873.2 1409.8 819.2 1415.4 819.2 C1421.0 819.2 1421.0 834.4 1426.6 834.4 C1427.3 834.4 1427.3 835.5 1428.0 835.5" stroke="#e91e63" stroke-width="2" fill="none" stroke-linejoin="round"/></svg>
<div class="mono" style="right:67.57px;top:738.61px;font-size:9px">256 MB</div>
<div class="mono" style="right:67.57px;top:904.31px;font-size:9px">0</div>
<div class="cbox" style="left:788px;top:734px"></div>
<div class="card" style="left:48px;top:985px;width:1400px;height:257px"></div>
<svg style="position:absolute;left:64px;top:1005px;overflow:visible" width="28" height="26" viewBox="64 1005 28 26" fill="none" stroke="#555555" stroke-width="1.0"><path d="M69.1 1012.45 H71.9 M78.3 1012.45 H85.8 M69.1 1018.47 H76.8 M83.5 1018.47 H85.8 M69.1 1024.5 H71.9 M78.3 1024.5 H85.8"/><circle cx="74.1" cy="1012.45" r="2.1"/><circle cx="81.2" cy="1018.47" r="2.1"/><circle cx="74.1" cy="1024.5" r="2.1"/></svg>
<div class="t" style="left:95.73px;top:1009.84px;font-size:17.2px;color:#303030;letter-spacing:0.350px;transform:scaleX(1.0111);transform-origin:0 0;-webkit-text-stroke:0.45px #303030;">System Information</div>
<div class="sub" style="left:68px;top:1049px"></div>
<div class="t" style="left:83.69px;top:1069.14px;font-size:12px;color:#858585;transform:scaleX(0.9049);transform-origin:0 0;-webkit-text-stroke:0.2px #858585;">OPERATING SYSTEM</div>
<div class="t" style="left:84.05px;top:1093.16px;font-size:15.4px;color:#222222;transform:scaleX(0.9967);transform-origin:0 0;-webkit-text-stroke:0.5px #222222;">Windows 11</div>
<div class="sub" style="left:343px;top:1049px"></div>
<div class="t" style="left:358.69px;top:1069.14px;font-size:12px;color:#858585;transform:scaleX(0.8873);transform-origin:0 0;-webkit-text-stroke:0.2px #858585;">ARCHITECTURE</div>
<div class="t" style="left:359.06px;top:1093.16px;font-size:15.4px;color:#222222;transform:scaleX(1.0373);transform-origin:0 0;-webkit-text-stroke:0.5px #222222;">amd64</div>
<div class="sub" style="left:618px;top:1049px"></div>
<div class="t" style="left:633.69px;top:1069.14px;font-size:12px;color:#858585;transform:scaleX(0.9401);transform-origin:0 0;-webkit-text-stroke:0.2px #858585;">JAVA VERSION</div>
<div class="t" style="left:634.02px;top:1093.16px;font-size:15.4px;color:#222222;transform:scaleX(0.8867);transform-origin:0 0;-webkit-text-stroke:0.5px #222222;">21</div>
<div class="sub" style="left:893px;top:1049px"></div>
<div class="t" style="left:908.69px;top:1069.14px;font-size:12px;color:#858585;transform:scaleX(0.8555);transform-origin:0 0;-webkit-text-stroke:0.2px #858585;">PROCESSORS</div>
<div class="t" style="left:909.01px;top:1093.16px;font-size:15.4px;color:#222222;transform:scaleX(0.8526);transform-origin:0 0;-webkit-text-stroke:0.5px #222222;">12</div>
<div class="sub" style="left:1168px;top:1049px"></div>
<div class="t" style="left:1183.69px;top:1069.14px;font-size:12px;color:#858585;transform:scaleX(0.9273);transform-origin:0 0;-webkit-text-stroke:0.2px #858585;">VM STARTED</div>
<div class="t" style="left:1184.06px;top:1093.16px;font-size:15.4px;color:#222222;transform:scaleX(1.0485);transform-origin:0 0;-webkit-text-stroke:0.5px #222222;">05/03/2026, 20:23:00</div>
<div class="sub" style="left:68px;top:1143px"></div>
<div class="t" style="left:83.69px;top:1163.14px;font-size:12px;color:#858585;transform:scaleX(0.9238);transform-origin:0 0;-webkit-text-stroke:0.2px #858585;">LOAD AVERAGE</div>
<div class="t" style="left:84.04px;top:1187.16px;font-size:15.4px;color:#222222;transform:scaleX(0.9604);transform-origin:0 0;-webkit-text-stroke:0.5px #222222;">-1.00</div>
<div class="sub" style="left:343px;top:1143px"></div>
<div class="t" style="left:358.69px;top:1163.14px;font-size:12px;color:#858585;transform:scaleX(0.9086);transform-origin:0 0;-webkit-text-stroke:0.2px #858585;">THREADS</div>
<div class="t" style="left:359.05px;top:1187.16px;font-size:15.4px;color:#222222;transform:scaleX(0.9833);transform-origin:0 0;-webkit-text-stroke:0.5px #222222;">26</div>
<div class="sub" style="left:618px;top:1143px"></div>
<div class="t" style="left:633.69px;top:1163.14px;font-size:12px;color:#858585;transform:scaleX(0.8827);transform-origin:0 0;-webkit-text-stroke:0.2px #858585;">RESOURCE CACHE SIZE</div>
<div class="t" style="left:634.05px;top:1187.16px;font-size:15.4px;color:#222222;transform:scaleX(0.9942);transform-origin:0 0;-webkit-text-stroke:0.5px #222222;">657.65 KB</div>
<div class="sub" style="left:893px;top:1143px"></div>
<div class="t" style="left:908.69px;top:1163.14px;font-size:12px;color:#858585;transform:scaleX(0.8870);transform-origin:0 0;-webkit-text-stroke:0.2px #858585;">RESOURCE CACHE HITS</div>
<div class="t" style="left:909.05px;top:1187.16px;font-size:15.4px;color:#222222;transform:scaleX(1.0059);transform-origin:0 0;-webkit-text-stroke:0.5px #222222;">990,794</div>
<div class="sub" style="left:1168px;top:1143px"></div>
<div class="t" style="left:1183.69px;top:1163.14px;font-size:12px;color:#858585;transform:scaleX(0.8838);transform-origin:0 0;-webkit-text-stroke:0.2px #858585;">RESOURCE CACHE MISSES</div>
<div class="t" style="left:1184.02px;top:1187.16px;font-size:15.4px;color:#222222;transform:scaleX(0.8843);transform-origin:0 0;-webkit-text-stroke:0.5px #222222;">9</div></body></html>
